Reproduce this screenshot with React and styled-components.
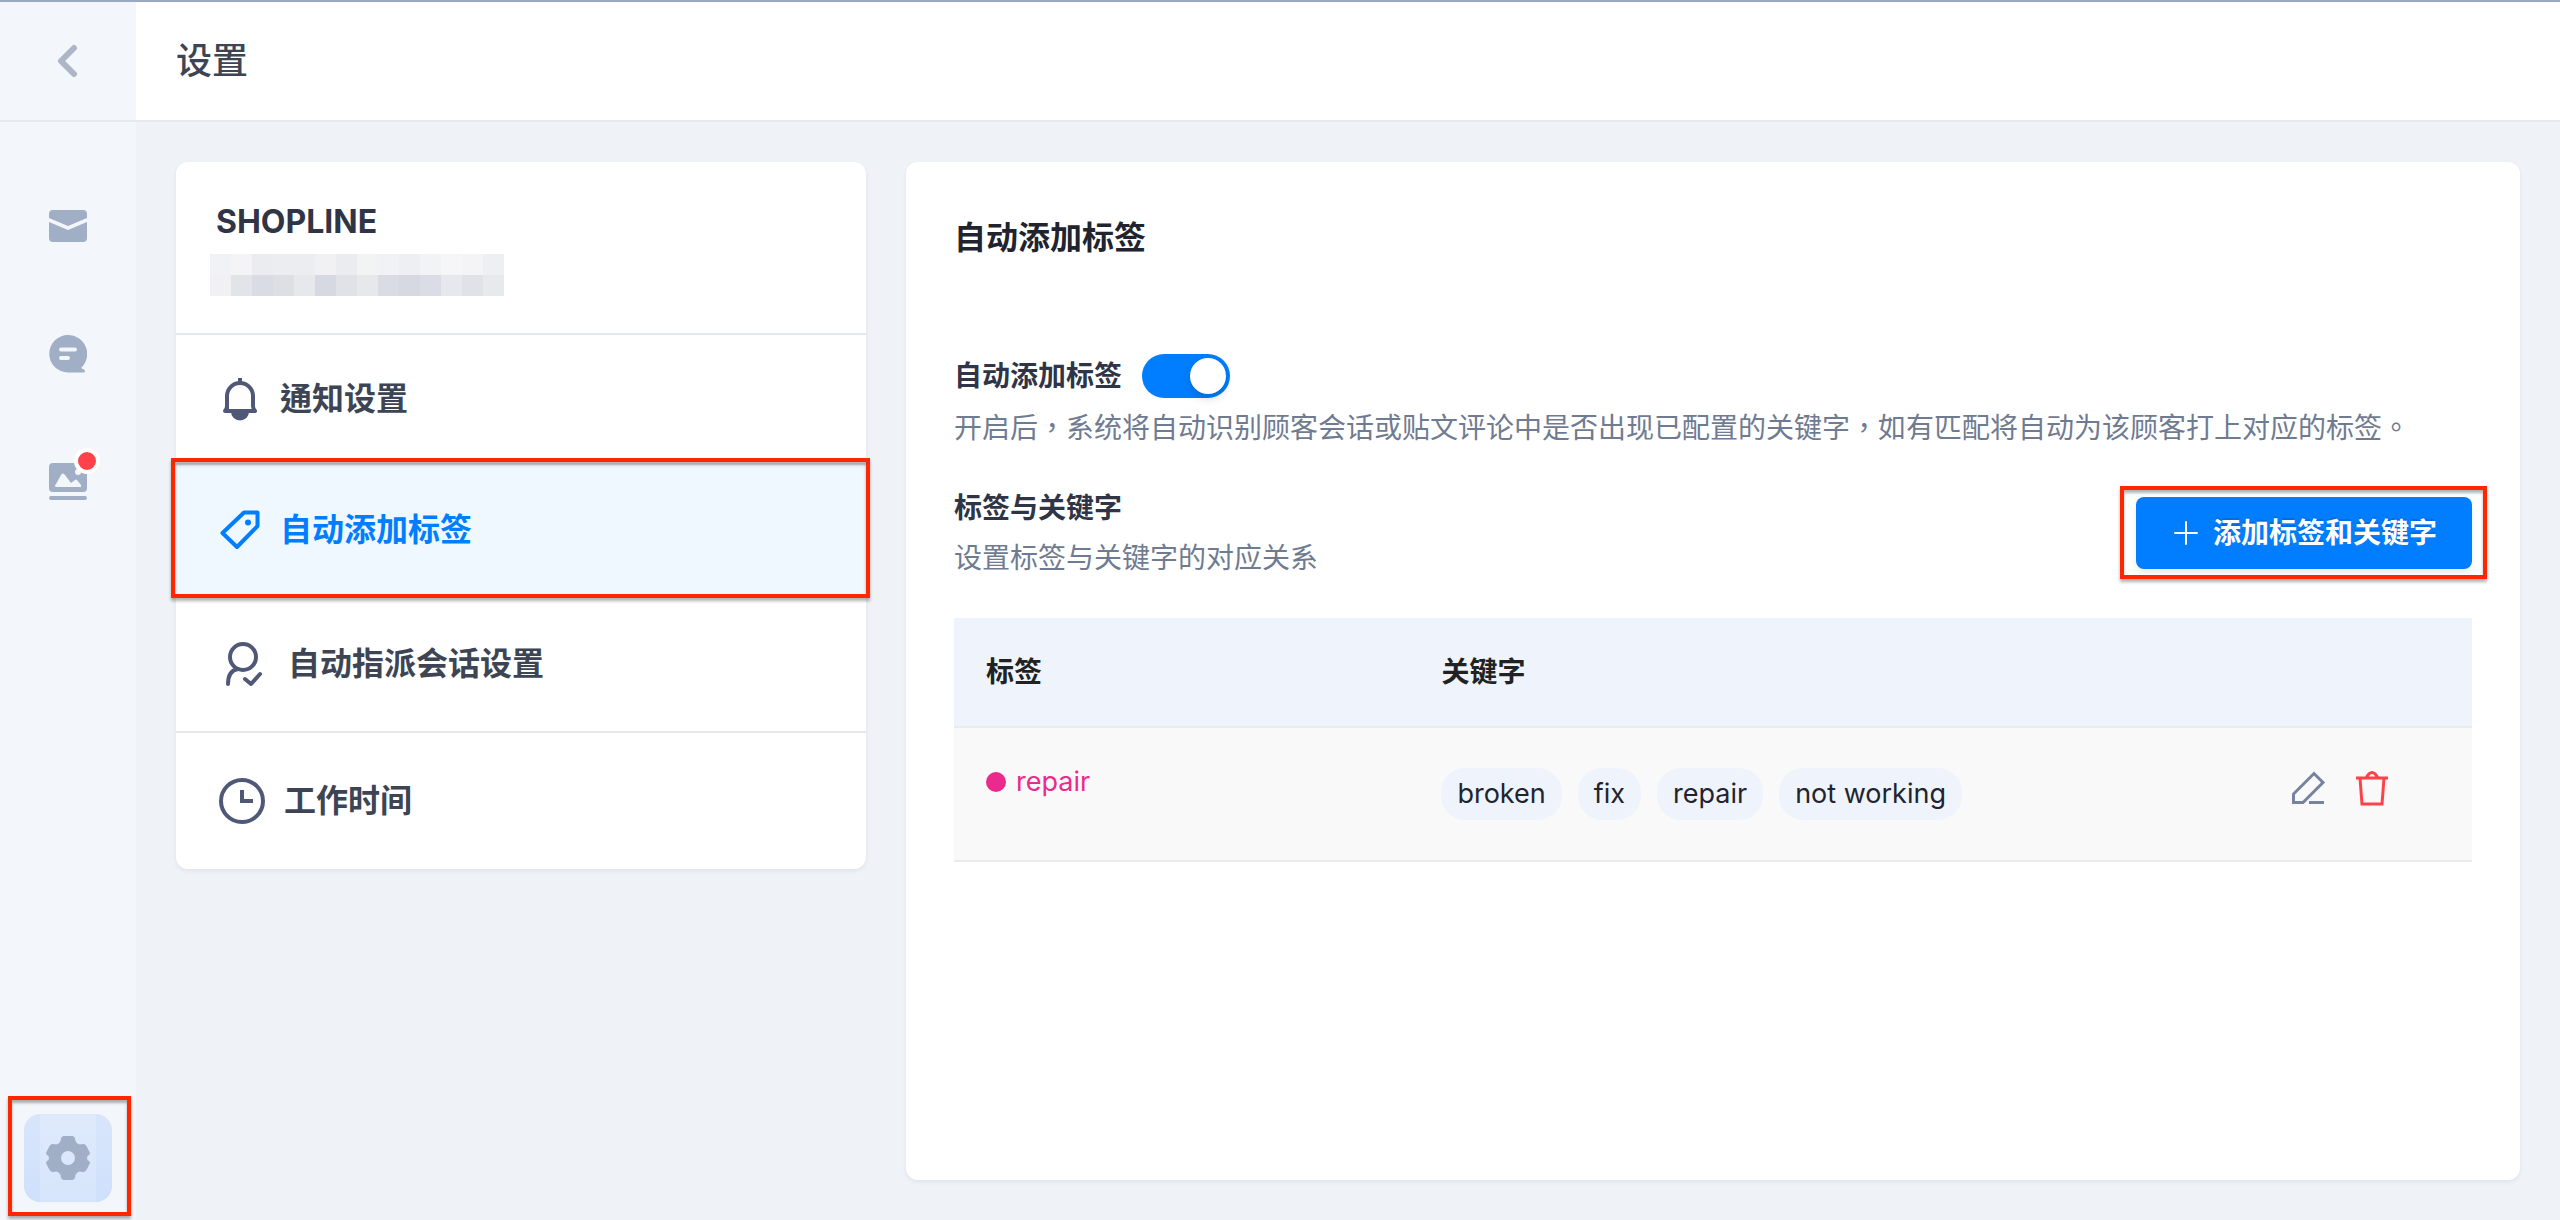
import React, { useState } from 'react';
import styled, { createGlobalStyle } from 'styled-components';

const GlobalStyle = createGlobalStyle`
  *, *::before, *::after {
    box-sizing: border-box;
  }

  body {
    margin: 0;
    background: #eff3f8;
    color: #3d4554;
    font-family: Inter, 'Noto Sans CJK TC', sans-serif;
    font-size: 28px;
    line-height: 44px;
  }

  button {
    padding: 0;
    border: 0;
    background: none;
    color: inherit;
    font: inherit;
    cursor: pointer;
  }

  svg {
    display: block;
    flex: none;
  }
`;

const Page = styled.div`
  display: grid;
  grid-template-columns: 136px minmax(0, 1fr);
  grid-template-rows: 120px minmax(0, 1fr);
  min-height: 100vh;
  border-top: 2px solid #9aa8c0;
  background: #eff3f8;
`;

const BackCell = styled.div`
  display: flex;
  align-items: center;
  justify-content: center;
  border-bottom: 2px solid #e4e9f0;
  background: #f3f6fb;
`;

const BackButton = styled.button`
  display: flex;
  align-items: center;
  justify-content: center;
  width: 88px;
  height: 88px;
`;

const Header = styled.header`
  display: flex;
  align-items: center;
  padding: 0 40px;
  border-bottom: 2px solid #e4e9f0;
  background: #fff;
`;

const HeaderTitle = styled.h1`
  margin: 0;
  font-size: 36px;
  font-weight: 500;
`;

const Sidebar = styled.nav`
  display: flex;
  flex-direction: column;
  align-items: center;
  gap: 40px;
  padding: 60px 0 18px;
  background: #f3f6fb;
`;

const NavButton = styled.button`
  position: relative;
  display: flex;
  align-items: center;
  justify-content: center;
  width: 88px;
  height: 88px;
  border-radius: 16px;
`;

const SettingsButton = styled(NavButton)`
  margin-top: auto;
  background:
    linear-gradient(rgba(255, 255, 255, 0.16), rgba(255, 255, 255, 0.16)) center / 56px 100% no-repeat,
    linear-gradient(#d8e6fb, #cfe0fb);
`;

const Badge = styled.span`
  position: absolute;
  top: 10px;
  right: 12px;
  width: 26px;
  height: 26px;
  border: 4px solid #fff;
  border-radius: 50%;
  background: #ff4249;
`;

const Highlight = styled.span`
  position: absolute;
  inset: ${(props) => props.$inset};
  z-index: 1;
  border: 4px solid #ff2600;
  box-shadow: 0 3px 3px rgba(0, 0, 0, 0.3), inset 0 3px 3px rgba(0, 0, 0, 0.3);
  pointer-events: none;
`;

const Main = styled.main`
  display: flex;
  align-items: stretch;
  gap: 40px;
  padding: 40px;
`;

const Card = styled.section`
  border-radius: 12px;
  background: #fff;
  box-shadow: 0 2px 4px rgba(40, 50, 80, 0.08);
`;

const MenuCard = styled(Card)`
  flex: 0 1 690px;
  align-self: flex-start;
`;

const Account = styled.div`
  padding: 40px 34px 37px;
  border-bottom: 2px solid #e4e9f0;
`;

const AccountName = styled.h2`
  margin: 0 0 12px;
  padding-left: 6px;
  color: #2f3547;
  font-size: 32px;
  font-weight: 700;
  line-height: 40px;
`;

const Mosaic = styled.div`
  display: grid;
  grid-template-columns: repeat(14, 21px);
  grid-auto-rows: 21px;
`;

const MosaicCell = styled.span`
  background: ${(props) => props.$color};
`;

const MenuItem = styled.button`
  position: relative;
  display: flex;
  align-items: center;
  gap: 16px;
  width: 100%;
  height: ${(props) => props.$height};
  padding: 0 40px;
  border-bottom: 2px solid ${(props) => (props.$active ? '#eff7ff' : '#e4e9f0')};
  background: ${(props) => (props.$active ? '#eff7ff' : 'transparent')};
  color: ${(props) => (props.$active ? '#007eff' : '#3d4554')};
  font-size: 32px;
  font-weight: 600;
  text-align: left;

  &:last-child {
    border-bottom: 0;
  }
`;

const MenuIcon = styled.span`
  display: flex;
  flex: none;
  justify-content: center;
  width: ${(props) => props.$width};
  color: ${(props) => (props.$active ? '#007eff' : '#4f5977')};
`;

const Panel = styled(Card)`
  flex: 1;
  min-width: 0;
  padding: 52px 48px;
`;

const PanelTitle = styled.h2`
  margin: 0 0 92px;
  color: #21242e;
  font-size: 32px;
  font-weight: 600;
  line-height: 48px;
`;

const SwitchRow = styled.div`
  display: flex;
  align-items: center;
  gap: 20px;
  margin-bottom: 8px;
`;

const SwitchLabel = styled.label`
  color: #2f3547;
  font-weight: 600;
`;

const Switch = styled.input`
  appearance: none;
  display: flex;
  width: 88px;
  height: 44px;
  margin: 0;
  padding: 4px;
  border-radius: 22px;
  background: #bfc6d4;
  cursor: pointer;

  &::before {
    content: '';
    width: 36px;
    height: 36px;
    border-radius: 50%;
    background: #fff;
    box-shadow: 0 4px 8px rgba(0, 35, 11, 0.2);
  }

  &:checked {
    justify-content: flex-end;
    background: #007eff;
  }
`;

const Hint = styled.p`
  margin: 0;
  color: #6f7b91;
`;

const KeywordHeader = styled.div`
  display: flex;
  align-items: flex-start;
  justify-content: space-between;
  margin: 36px 0 38px;
`;

const KeywordTitle = styled.h3`
  margin: 0 0 6px;
  color: #2f3547;
  font-size: 28px;
  font-weight: 600;
`;

const AddButton = styled.button`
  position: relative;
  display: flex;
  align-items: center;
  justify-content: center;
  gap: 14px;
  height: 72px;
  margin-top: 11px;
  padding: 0 35px;
  border-radius: 8px;
  background: #007eff;
  color: #fff;
  font-weight: 600;
  text-shadow: 0 -2px 0 rgba(0, 0, 0, 0.12);
  box-shadow: 0 4px 6px rgba(0, 0, 0, 0.08);
`;

const Table = styled.table`
  width: 100%;
  border-collapse: separate;
  border-spacing: 0;
  table-layout: fixed;
`;

const HeadCell = styled.th`
  width: ${(props) => props.$width};
  height: 110px;
  padding: 0 32px;
  border-bottom: 2px solid #ebebeb;
  background: #eff4fc;
  color: #222;
  font-weight: 600;
  text-align: left;
`;

const Cell = styled.td`
  padding: 32px;
  border-bottom: 2px solid #ebebeb;
  background: #f9f9f9;
  font-size: 27px;
  vertical-align: top;
`;

const Tag = styled.span`
  display: flex;
  align-items: center;
  gap: 10px;
  color: #eb2a8d;

  &::before {
    content: '';
    width: 20px;
    height: 20px;
    border-radius: 50%;
    background: currentColor;
  }
`;

const KeywordList = styled.div`
  display: flex;
  flex-wrap: wrap;
  gap: 16px;
  padding: 8px 0;
`;

const Keyword = styled.span`
  padding: 4px 16px;
  border-radius: 24px;
  background: #eff4fc;
  color: #21242e;
`;

const Actions = styled.div`
  display: flex;
  justify-content: flex-end;
  gap: 24px;
  padding: 8px 48px 0 0;
`;

const IconButton = styled.button`
  display: flex;
  width: 40px;
  height: 40px;
`;

const mosaicColors = [
  '#f1f2f6', '#f4f4f6', '#ebecef', '#ecedf1', '#ecedf1', '#f1f1f3', '#ebecf0',
  '#f3f3f4', '#f1f2f5', '#eeeff3', '#f2f3f5', '#f6f6f8', '#f4f4f6', '#eeeff3',
  '#f1f1f3', '#e3e4e9', '#d9dce5', '#dedfe4', '#e7e8ec', '#d6d9e2', '#e1e2e8',
  '#e7e8ec', '#d9dce5', '#d6d9e2', '#dadde6', '#e7e8ee', '#e1e2e7', '#e8e9ed',
];

const ChevronIcon = () => (
  <svg width="24" height="36" viewBox="0 0 24 36" fill="none" stroke="#adb5c7" strokeWidth="6" strokeLinecap="round" strokeLinejoin="round">
    <path d="M18 5L5 18l13 13" />
  </svg>
);

const MailIcon = () => (
  <svg width="38" height="32" viewBox="0 0 38 32" fill="#a0aec6">
    <path d="M0 8V4a4 4 0 0 1 4-4h30a4 4 0 0 1 4 4v4l-19 8z" />
    <path d="M0 12l19 8 19-8v16a4 4 0 0 1-4 4H4a4 4 0 0 1-4-4z" />
  </svg>
);

const ChatIcon = () => (
  <svg width="38" height="38" viewBox="0 0 38 38">
    <path d="M19 0a19 19 0 0 1 13 33l3 1.500q2 2 0 3H19A18.500 18.500 0 0 1 19 0z" fill="#a0aec6" />
    <path d="M12 14.500h14M12 23h7" stroke="#f3f6fb" strokeWidth="4" strokeLinecap="round" />
  </svg>
);

const PictureIcon = () => (
  <svg width="38" height="38" viewBox="0 0 38 38">
    <rect width="38" height="29" rx="4" fill="#a0aec6" />
    <rect y="33" width="38" height="4" rx="2" fill="#a0aec6" />
    <path d="M7 24q-2-1 0-3l5-9q2-3 4 0l6 8 4-3q1-1 2 0l4 5v2z" fill="#f3f6fb" />
    <circle cx="29" cy="9" r="3" fill="#f3f6fb" />
  </svg>
);

const GearIcon = () => (
  <svg width="44" height="44" viewBox="0 0 44 44">
    <path
      fillRule="evenodd"
      fill="#a0aec6"
      d="M18 0h8q3 0 3.500 5 1 3 4 3.500l4-.5q2 0 4 4l2.500 5q0 2-2.500 3-1 2 0 4 2.500 1 2.500 3l-2.500 5q-2 4-4 4l-4-.5q-3 .5-4 3.500-.5 5-3.500 5h-8q-3 0-3.500-5-1-3-4-3.500l-4 .5q-2 0-4-4L0 27q0-2 2.500-3 1-2 0-4Q0 19 0 17l2.500-5q2-4 4-4l4 .5q3-.5 4-3.500Q15 0 18 0zM22 15a7 7 0 1 0 0 14 7 7 0 0 0 0-14z"
    />
  </svg>
);

const BellIcon = () => (
  <svg width="36" height="44" viewBox="0 0 36 44">
    <path d="M18 1v5M5 33V19a13 13 0 0 1 26 0v10q0 3 2 5H3q2-2 2-5z" fill="none" stroke="currentColor" strokeWidth="4" strokeLinejoin="round" />
    <path d="M9 35h18a9 8.500 0 0 1-18 0z" fill="currentColor" />
  </svg>
);

const TagIcon = () => (
  <svg width="40" height="40" viewBox="0 0 40 40">
    <path d="M24 2.500h13.500V16L17 37 2.500 23z" fill="none" stroke="currentColor" strokeWidth="4" strokeLinejoin="round" />
    <circle cx="28" cy="12.500" r="3" fill="currentColor" />
  </svg>
);

const AssignIcon = () => (
  <svg width="38" height="46" viewBox="0 0 38 46" fill="none" stroke="currentColor" strokeWidth="4" strokeLinecap="round" strokeLinejoin="round">
    <circle cx="18" cy="16" r="13" />
    <path d="M3 43c0-9 4-14 10-15M20 38l6 5 9-10" />
  </svg>
);

const ClockIcon = () => (
  <svg width="46" height="46" viewBox="0 0 46 46" fill="none" stroke="currentColor" strokeWidth="4">
    <circle cx="23" cy="23" r="21" />
    <path d="M23 12v11h11" />
  </svg>
);

const PlusIcon = () => (
  <svg width="28" height="28" viewBox="0 0 28 28" stroke="#fff" strokeWidth="2" strokeLinecap="round">
    <path d="M15 3v22M4 14h22" />
  </svg>
);

const EditIcon = () => (
  <svg width="40" height="40" viewBox="0 0 40 40" fill="none" stroke="#7782a0" strokeWidth="3">
    <path d="M5.500 34.500V26L26 5.500l9 9-20 20zM21 34.500h15" />
  </svg>
);

const TrashIcon = () => (
  <svg width="40" height="40" viewBox="0 0 40 40" fill="none" stroke="#ff4249" strokeWidth="3">
    <path d="M4 10h32M8 10l2 26h20l2-26M14 10q6-11 12 0" />
  </svg>
);

const menuItems = [
  { label: '通知设置', Icon: BellIcon, iconWidth: '48px', height: '130px' },
  { label: '自动添加标签', Icon: TagIcon, iconWidth: '48px', height: '132px', active: true },
  { label: '自动指派会话设置', Icon: AssignIcon, iconWidth: '56px', height: '136px' },
  { label: '工作时间', Icon: ClockIcon, iconWidth: '52px', height: '136px' },
];

const rows = [
  { tag: 'repair', keywords: ['broken', 'fix', 'repair', 'not working'] },
];

function SettingsMenu() {
  return (
    <MenuCard>
      <Account>
        <AccountName>SHOPLINE</AccountName>
        <Mosaic>
          {mosaicColors.map((color, index) => <MosaicCell key={index} $color={color} />)}
        </Mosaic>
      </Account>
      {menuItems.map(({ label, Icon, iconWidth, height, active }) => (
        <MenuItem type="button" key={label} $active={active} $height={height}>
          <MenuIcon $width={iconWidth} $active={active}><Icon /></MenuIcon>
          {label}
          {active && <Highlight $inset="-7px -4px -3px -5px" />}
        </MenuItem>
      ))}
    </MenuCard>
  );
}

function KeywordTable() {
  return (
    <Table>
      <thead>
        <tr>
          <HeadCell $width="30%">标签</HeadCell>
          <HeadCell>关键字</HeadCell>
          <HeadCell $width="20%" aria-label="操作" />
        </tr>
      </thead>
      <tbody>
        {rows.map(({ tag, keywords }) => (
          <tr key={tag}>
            <Cell><Tag>{tag}</Tag></Cell>
            <Cell>
              <KeywordList>
                {keywords.map((word) => <Keyword key={word}>{word}</Keyword>)}
              </KeywordList>
            </Cell>
            <Cell>
              <Actions>
                <IconButton type="button" aria-label="编辑"><EditIcon /></IconButton>
                <IconButton type="button" aria-label="删除"><TrashIcon /></IconButton>
              </Actions>
            </Cell>
          </tr>
        ))}
      </tbody>
    </Table>
  );
}

function App() {
  const [enabled, setEnabled] = useState(true);

  return (
    <Page>
      <GlobalStyle />
      <BackCell>
        <BackButton type="button" aria-label="返回"><ChevronIcon /></BackButton>
      </BackCell>
      <Header>
        <HeaderTitle>设置</HeaderTitle>
      </Header>
      <Sidebar>
        <NavButton type="button" aria-label="消息"><MailIcon /></NavButton>
        <NavButton type="button" aria-label="评论"><ChatIcon /></NavButton>
        <NavButton type="button" aria-label="贴文">
          <PictureIcon />
          <Badge />
        </NavButton>
        <SettingsButton type="button" aria-label="设置">
          <GearIcon />
          <Highlight $inset="-18px -19px -14px -16px" />
        </SettingsButton>
      </Sidebar>
      <Main>
        <SettingsMenu />
        <Panel>
          <PanelTitle>自动添加标签</PanelTitle>
          <SwitchRow>
            <SwitchLabel htmlFor="auto-tag">自动添加标签</SwitchLabel>
            <Switch
              id="auto-tag"
              type="checkbox"
              checked={enabled}
              onChange={(e) => setEnabled(e.target.checked)}
            />
          </SwitchRow>
          <Hint>开启后，系统将自动识别顾客会话或贴文评论中是否出现已配置的关键字，如有匹配将自动为该顾客打上对应的标签。</Hint>
          <KeywordHeader>
            <div>
              <KeywordTitle>标签与关键字</KeywordTitle>
              <Hint>设置标签与关键字的对应关系</Hint>
            </div>
            <AddButton type="button">
              <PlusIcon />
              添加标签和关键字
              <Highlight $inset="-11px -15px -10px -16px" />
            </AddButton>
          </KeywordHeader>
          <KeywordTable />
        </Panel>
      </Main>
    </Page>
  );
}

export default App;
